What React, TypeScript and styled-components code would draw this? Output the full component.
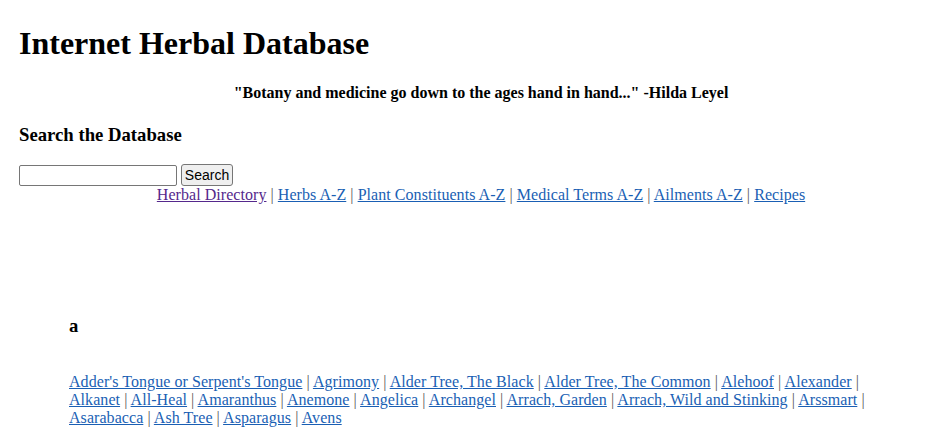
import React from "react";
import styled, { createGlobalStyle } from "styled-components";

const Global = createGlobalStyle`
  html, body { margin: 0; padding: 0; background: #ffffff; }
  body { font-family: "Liberation Serif", "Times New Roman", serif; color: #000; font-size: 16px; }
`;

const Page = styled.div`
  padding: 0 4px 0 19px;
`;

const Title = styled.h1`
  margin: 25px 0 0;
  font-size: 32px;
  font-weight: bold;
  line-height: 36px;
`;

const Quote = styled.p`
  margin: 23px 0 0;
  text-align: center;
  font-weight: bold;
  line-height: 18px;
`;

const SectionTitle = styled.h3`
  margin: 22px 0 0;
  font-size: 18.72px;
  font-weight: bold;
  line-height: 21px;
`;

const SearchForm = styled.form`
  display: flex;
  align-items: center;
  gap: 4px;
  margin-top: 19px;
  height: 22px;
`;

const SearchInput = styled.input`
  box-sizing: border-box;
  width: 158px;
  height: 21px;
  border: 1px solid #767676;
  border-radius: 2px;
  padding: 1px 2px;
  font-family: "Liberation Sans", Arial, sans-serif;
  font-size: 13.33px;
  background: #fff;
`;

const SearchButton = styled.button`
  box-sizing: border-box;
  width: 52px;
  height: 22px;
  border: 1px solid #767676;
  border-radius: 3px;
  background: #efefef;
  font-family: "Liberation Sans", Arial, sans-serif;
  font-size: 14px;
  color: #000;
  padding: 0;
`;

const NavBar = styled.nav`
  text-align: center;
  line-height: 18px;
  letter-spacing: 0.05px;
`;

const Link = styled.a<{ $visited?: boolean }>`
  color: ${(p) => (p.$visited ? "#55288c" : "#1a5fb4")};
  text-decoration: underline;
`;

const Sep = styled.span`
  color: #5a5a5a;
`;

const LetterBlock = styled.section`
  padding: 0 50px;
  margin-top: 111px;
`;

const LinkList = styled.p`
  margin: 37px 0 0;
  line-height: 18px;
  letter-spacing: 0.06px;
`;

const nav = [
  "Herbal Directory",
  "Herbs A-Z",
  "Plant Constituents A-Z",
  "Medical Terms A-Z",
  "Ailments A-Z",
  "Recipes",
];

const herbs = [
  "Adder's Tongue or Serpent's Tongue",
  "Agrimony",
  "Alder Tree, The Black",
  "Alder Tree, The Common",
  "Alehoof",
  "Alexander",
  "Alkanet",
  "All-Heal",
  "Amaranthus",
  "Anemone",
  "Angelica",
  "Archangel",
  "Arrach, Garden",
  "Arrach, Wild and Stinking",
  "Arssmart",
  "Asarabacca",
  "Ash Tree",
  "Asparagus",
  "Avens",
];

export default function App() {
  return (
    <Page>
      <Global />
      <Title>Internet Herbal Database</Title>
      <Quote>"Botany and medicine go down to the ages hand in hand..." -Hilda Leyel</Quote>
      <SectionTitle>Search the Database</SectionTitle>
      <SearchForm onSubmit={(e) => e.preventDefault()}>
        <SearchInput type="text" />
        <SearchButton type="submit">Search</SearchButton>
      </SearchForm>
      <NavBar>
        {nav.map((n, i) => (
          <React.Fragment key={n}>
            {i > 0 && <Sep> | </Sep>}
            <Link href="#" $visited={i === 0}>
              {n}
            </Link>
          </React.Fragment>
        ))}
      </NavBar>
      <LetterBlock>
        <SectionTitle>a</SectionTitle>
        <LinkList>
          {herbs.map((h, i) => (
            <React.Fragment key={h}>
              <Link href="#">{h}</Link>
              {i < herbs.length - 1 && <Sep> | </Sep>}
            </React.Fragment>
          ))}
        </LinkList>
      </LetterBlock>
    </Page>
  );
}
